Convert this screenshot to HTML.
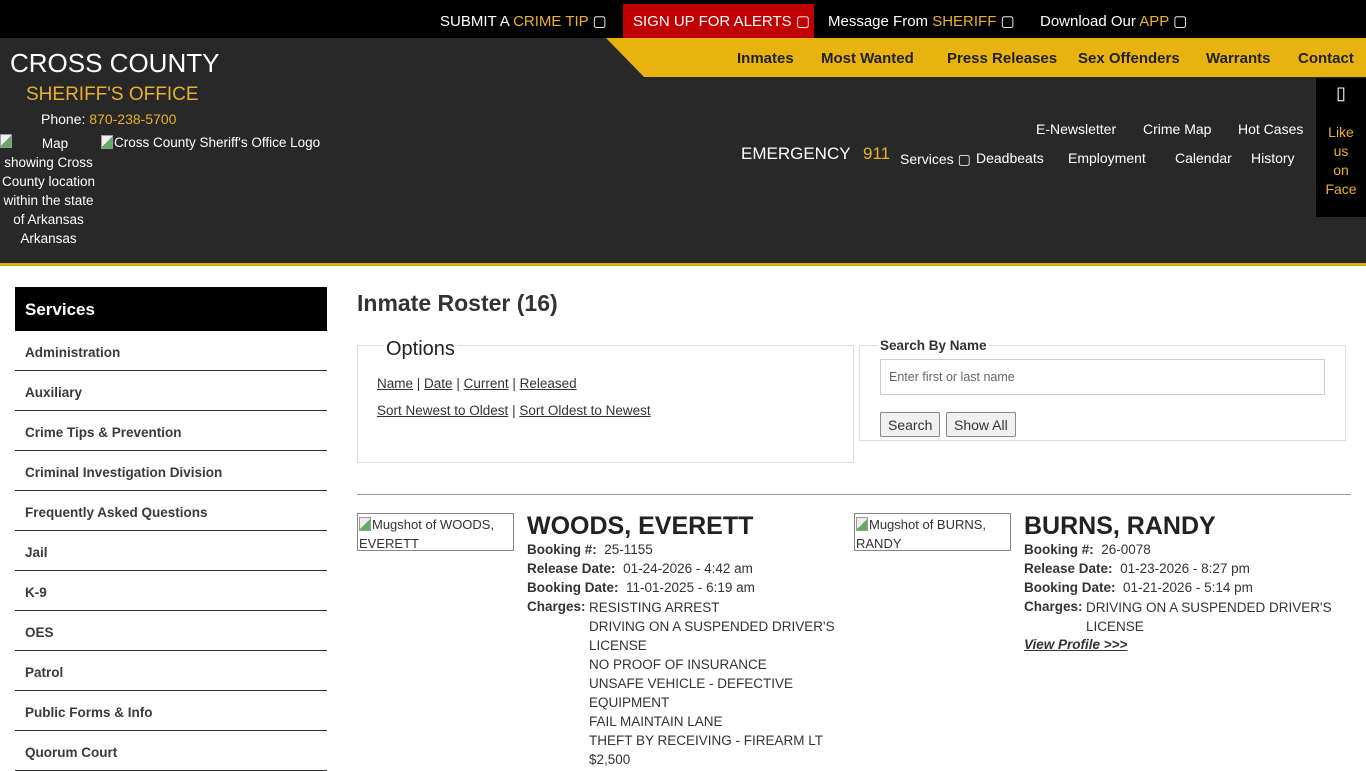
<!DOCTYPE html>
<html><head><meta charset="utf-8"><style>
*{margin:0;padding:0;box-sizing:border-box}
body{width:1366px;height:768px;overflow:hidden;background:#fff;font-family:"Liberation Sans",sans-serif;color:#333;position:relative}
.a{position:absolute;white-space:nowrap}
.g{color:#e8b12a}
#top{position:absolute;left:0;top:0;width:1366px;height:38px;background:#000}
#top .a{color:#fff;font-size:15px;top:12px}
#hdr{position:absolute;left:0;top:38px;width:1366px;height:228px;background:#282828;border-bottom:3px solid #d9ad1a}
#ybar{position:absolute;left:606px;top:38px;width:760px;height:39px;background:#e8b30f;clip-path:polygon(0 0,100% 0,100% 100%,38px 100%)}
#ybar .a{font-weight:bold;color:#222;font-size:15px;top:12px}
.wn{color:#fff;font-size:14px}
#side{position:absolute;left:15px;top:287px;width:312px}
#side .h{background:#000;color:#fff;font-weight:bold;font-size:17px;height:44px;padding:13px 10px}
#side .i{height:40px;border-bottom:1px solid #333;font-size:13.5px;font-weight:bold;color:#3a3a3a;padding:14px 10px 0}
.u{text-decoration:underline;color:#333}
.bx{position:absolute;border:1px solid #ddd}
.btn{position:absolute;border:1px solid #888;background:#f0f0f0;font-size:14px;height:25px;padding:4px 7px;border-radius:2px}
.lbl{font-weight:bold}
.t{font-size:13.5px;color:#333;position:absolute;white-space:nowrap}
.ic{display:inline-block;width:12px;height:14px;border:1px solid #999;background:linear-gradient(135deg,#eee 50%,#6a6 50%);vertical-align:-2px;margin-right:1px}
</style></head><body>
<div id="top">
<div class="a" style="left:440px">SUBMIT A <span class="g">CRIME TIP</span> ▢</div>
<div style="position:absolute;left:623px;top:4px;width:191px;height:34px;background:#c00000"></div>
<div class="a" style="left:633px">SIGN UP FOR ALERTS ▢</div>
<div class="a" style="left:828px">Message From <span class="g">SHERIFF</span> ▢</div>
<div class="a" style="left:1040px">Download Our <span class="g">APP</span> ▢</div>
</div>
<div id="hdr">
<div class="a" style="left:10px;top:10px;color:#fff;font-size:26px">CROSS COUNTY</div>
<div class="a" style="left:26px;top:46px;color:#e8b12a;font-size:19px">SHERIFF'S OFFICE</div>
<div class="a wn" style="left:41px;top:73px">Phone: <span class="g">870-238-5700</span></div>
<div class="wn" style="position:absolute;left:0;top:96px;width:97px;text-align:center;line-height:19px;font-size:13.5px"><span class="ic" style="float:left"></span>Map<br>showing Cross County location within the state of Arkansas Arkansas</div>
<div class="a wn" style="left:101px;top:97px;font-size:13.5px"><span class="ic"></span>Cross County Sheriff's Office Logo</div>
<div class="a" style="left:741px;top:106px;color:#fff;font-size:17px">EMERGENCY <span class="g" style="margin-left:8px">911</span></div>
<div class="a wn" style="left:1036px;top:83px">E-Newsletter</div>
<div class="a wn" style="left:1143px;top:83px">Crime Map</div>
<div class="a wn" style="left:1238px;top:83px">Hot Cases</div>
<div class="a wn" style="left:900px;top:113px">Services ▢</div>
<div class="a wn" style="left:976px;top:112px">Deadbeats</div>
<div class="a wn" style="left:1068px;top:112px">Employment</div>
<div class="a wn" style="left:1175px;top:112px">Calendar</div>
<div class="a wn" style="left:1251px;top:112px">History</div>
<div style="position:absolute;left:1316px;top:40px;width:50px;height:139px;background:#000;color:#e8b12a;text-align:center;font-size:14px;line-height:19px;padding-top:6px;overflow:hidden"><span style="color:#fff;font-size:18px">▯</span><br><br>Like<br>us<br>on<br>Face</div>
</div>
<div id="ybar">
<div class="a" style="left:131px">Inmates</div>
<div class="a" style="left:215px">Most Wanted</div>
<div class="a" style="left:341px">Press Releases</div>
<div class="a" style="left:472px">Sex Offenders</div>
<div class="a" style="left:600px">Warrants</div>
<div class="a" style="left:692px">Contact</div>
</div>
<div id="side">
<div class="h">Services</div>
<div class="i">Administration</div><div class="i">Auxiliary</div><div class="i">Crime Tips &amp; Prevention</div><div class="i">Criminal Investigation Division</div><div class="i">Frequently Asked Questions</div><div class="i">Jail</div><div class="i">K-9</div><div class="i">OES</div><div class="i">Patrol</div><div class="i">Public Forms &amp; Info</div><div class="i">Quorum Court</div>
</div>
<div class="a" style="left:357px;top:290px;font-size:23px;font-weight:bold">Inmate Roster (16)</div>
<div class="bx" style="left:357px;top:345px;width:497px;height:118px"></div>
<div class="a" style="left:384px;top:338px;font-size:20px;background:#fff;padding:0 2px;color:#222">Options</div>
<div class="t" style="left:377px;top:376px"><span class="u">Name</span> | <span class="u">Date</span> | <span class="u">Current</span> | <span class="u">Released</span></div>
<div class="t" style="left:377px;top:403px"><span class="u">Sort Newest to Oldest</span> | <span class="u">Sort Oldest to Newest</span></div>
<div class="bx" style="left:859px;top:345px;width:487px;height:96px"></div>
<div class="a" style="left:878px;top:338px;font-size:13.5px;font-weight:bold;background:#fff;padding:0 2px">Search By Name</div>
<div class="bx" style="left:880px;top:359px;width:445px;height:36px;border-color:#ccc;font-size:12.5px;color:#666;padding:10px 8px">Enter first or last name</div>
<div class="btn" style="left:880px;top:412px">Search</div>
<div class="btn" style="left:946px;top:412px">Show All</div>
<div style="position:absolute;left:357px;top:494px;width:994px;border-top:1px solid #999"></div>
<div class="bx" style="left:357px;top:513px;width:157px;height:38px;border-color:#888;font-size:13px;padding:1px;white-space:normal;line-height:19px"><span class="ic"></span>Mugshot of WOODS, EVERETT</div>
<div class="a" style="left:527px;top:512px;font-size:25px;font-weight:bold;color:#222">WOODS, EVERETT</div>
<div class="t" style="left:527px;top:542px"><span class="lbl">Booking #:</span>&nbsp; 25-1155</div>
<div class="t" style="left:527px;top:561px"><span class="lbl">Release Date:</span>&nbsp; 01-24-2026 - 4:42 am</div>
<div class="t" style="left:527px;top:580px"><span class="lbl">Booking Date:</span>&nbsp; 11-01-2025 - 6:19 am</div>
<div class="t" style="left:527px;top:599px"><span class="lbl">Charges:</span></div>
<div class="t" style="left:589px;top:598px;line-height:19px">RESISTING ARREST<br>DRIVING ON A SUSPENDED DRIVER'S<br>LICENSE<br>NO PROOF OF INSURANCE<br>UNSAFE VEHICLE - DEFECTIVE<br>EQUIPMENT<br>FAIL MAINTAIN LANE<br>THEFT BY RECEIVING - FIREARM LT<br>$2,500</div>
<div class="bx" style="left:854px;top:513px;width:157px;height:38px;border-color:#888;font-size:13px;padding:1px;white-space:normal;line-height:19px"><span class="ic"></span>Mugshot of BURNS, RANDY</div>
<div class="a" style="left:1024px;top:512px;font-size:25px;font-weight:bold;color:#222">BURNS, RANDY</div>
<div class="t" style="left:1024px;top:542px"><span class="lbl">Booking #:</span>&nbsp; 26-0078</div>
<div class="t" style="left:1024px;top:561px"><span class="lbl">Release Date:</span>&nbsp; 01-23-2026 - 8:27 pm</div>
<div class="t" style="left:1024px;top:580px"><span class="lbl">Booking Date:</span>&nbsp; 01-21-2026 - 5:14 pm</div>
<div class="t" style="left:1024px;top:599px"><span class="lbl">Charges:</span></div>
<div class="t" style="left:1086px;top:598px;line-height:19px">DRIVING ON A SUSPENDED DRIVER'S<br>LICENSE</div>
<div class="t" style="left:1024px;top:637px;font-weight:bold;font-style:italic;text-decoration:underline">View Profile &gt;&gt;&gt;</div>
</body></html>
